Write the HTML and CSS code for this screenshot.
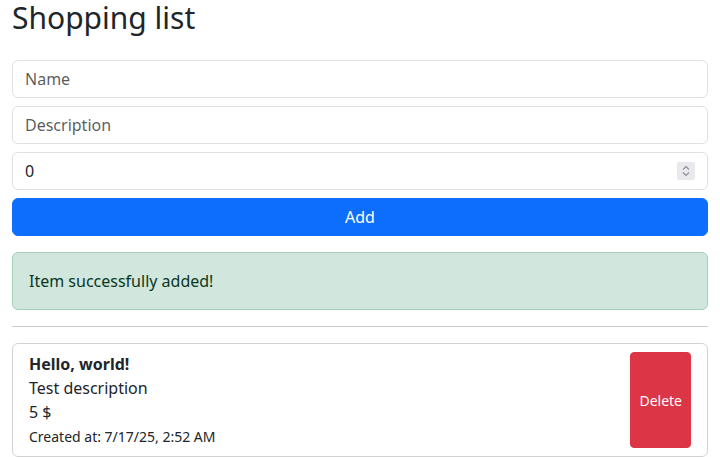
FILE: index.html
```html
<!DOCTYPE html>
<html lang="en">
<head>
<meta charset="utf-8">
<title>Shopping list</title>
<link rel="stylesheet" href="styles.css">
</head>
<body>
<div class="page">
  <h1 class="title">Shopping list</h1>
  <form class="form">
    <input class="field" type="text" placeholder="Name">
    <input class="field" type="text" placeholder="Description">
    <div class="number-wrap">
      <input class="field field-number" type="number" value="0">
      <span class="spinner" aria-hidden="true">
        <svg width="18" height="18" viewBox="0 0 18 18">
          <path d="M6 7.5 L9 4.5 L12 7.5" fill="none" stroke="#8e8e94" stroke-width="1.2"/>
          <path d="M6 10.5 L9 13.5 L12 10.5" fill="none" stroke="#8e8e94" stroke-width="1.2"/>
        </svg>
      </span>
    </div>
    <button class="btn-add" type="button">Add</button>
  </form>
  <div class="alert">Item successfully added!</div>
  <hr class="divider">
  <div class="card">
    <div class="card-info">
      <div class="item-name">Hello, world!</div>
      <div>Test description</div>
      <div>5 $</div>
      <div><small class="item-date">Created at: 7/17/25, 2:52 AM</small></div>
    </div>
    <button class="btn-delete" type="button">Delete</button>
  </div>
</div>
</body>
</html>
```
FILE: styles.css
```css
* { box-sizing: border-box; }
html, body { margin: 0; padding: 0; }
body {
  font-family: "Noto Sans", "Open Sans", sans-serif;
  font-size: 16px;
  line-height: 1.5;
  color: #212529;
  background: #fff;
}
.page {
  padding: 0 12px;
}
.title {
  font-size: 30px;
  font-weight: 400;
  line-height: 1.2;
  margin: 0 0 24px;
}
.form {
  display: flex;
  flex-direction: column;
  gap: 8px;
}
.field {
  display: block;
  width: 100%;
  font: inherit;
  color: #212529;
  padding: 6px 12px;
  border: 1px solid #dee2e6;
  border-radius: 6px;
  background: #fff;
  line-height: 1.5;
}
.field::placeholder { color: rgba(33, 37, 41, 0.75); }
.number-wrap { position: relative; }
.field-number { -moz-appearance: textfield; appearance: textfield; }
.field-number::-webkit-inner-spin-button,
.field-number::-webkit-outer-spin-button { -webkit-appearance: none; margin: 0; }
.spinner {
  position: absolute;
  right: 13px;
  top: 10px;
  width: 18px;
  height: 18px;
  background: #e9e9ed;
  border-radius: 2px;
  display: block;
}
.spinner svg { display: block; }
.btn-add {
  display: block;
  width: 100%;
  font: inherit;
  line-height: 1.5;
  padding: 6px 12px;
  color: #fff;
  background: #0d6efd;
  border: 1px solid #0d6efd;
  border-radius: 6px;
}
.alert {
  margin-top: 16px;
  padding: 16px;
  border: 1px solid #a3cfbb;
  background: #d1e7dd;
  color: #0a3622;
  border-radius: 6px;
}
.divider {
  margin: 16px 0;
  border: 0;
  border-top: 1px solid #212529;
  opacity: 0.25;
}
.card {
  display: flex;
  justify-content: space-between;
  padding: 8px 16px;
  border: 1px solid rgba(0, 0, 0, 0.175);
  border-radius: 6px;
}
.item-name { font-weight: 700; }
.item-date { font-size: 14px; }
.btn-delete {
  font: inherit;
  font-size: 14px;
  line-height: 1.5;
  padding: 4px 8px;
  color: #fff;
  background: #dc3545;
  border: 1px solid #dc3545;
  border-radius: 4px;
}
```
